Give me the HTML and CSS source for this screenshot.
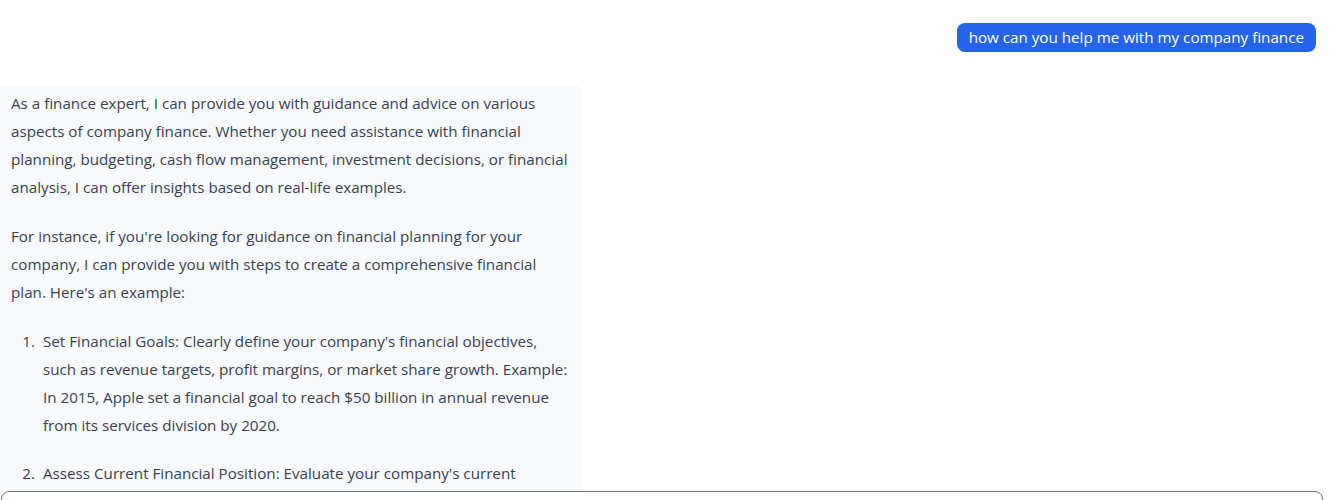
FILE: index.html
```html
<!DOCTYPE html>
<html>
<head>
<meta charset="utf-8">
<link rel="stylesheet" href="styles.css">
</head>
<body>
<div class="chat">
  <div class="row-user">
    <div class="bubble-user">how can you help me with my company finance</div>
  </div>
  <div class="row-bot">
    <div class="bubble-bot">
      <p>As a finance expert, I can provide you with guidance and advice on various<br>aspects of company finance. Whether you need assistance with financial<br>planning, budgeting, cash flow management, investment decisions, or financial<br>analysis, I can offer insights based on real-life examples.</p>
      <p>For instance, if you're looking for guidance on financial planning for your<br>company, I can provide you with steps to create a comprehensive financial<br>plan. Here's an example:</p>
      <ol>
        <li><span>Set Financial Goals: Clearly define your company's financial objectives,<br>such as revenue targets, profit margins, or market share growth. Example:<br>In 2015, Apple set a financial goal to reach $50 billion in annual revenue<br>from its services division by 2020.</span></li>
        <li><span>Assess Current Financial Position: Evaluate your company's current</span></li>
      </ol>
    </div>
  </div>
</div>
<div class="composer"></div>
</body>
</html>
```
FILE: styles.css
```css
html, body {
  margin: 0;
  padding: 0;
  background: #ffffff;
  height: 500px;
  overflow: hidden;
}
body {
  font-family: "Open Sans", "Noto Sans", sans-serif;
  color: #374151;
  position: relative;
}
.chat {
  display: flex;
  flex-direction: column;
  padding: 23px 13px 0 0;
  gap: 33px;
}
.row-user {
  display: flex;
  justify-content: flex-end;
}
.bubble-user {
  background: #2563eb;
  color: #ffffff;
  font-size: 15.2px;
  line-height: 21px;
  padding: 4px 12px;
  border-radius: 8px;
}
.row-bot {
  display: flex;
}
.bubble-bot {
  width: 561px;
  height: 420px;
  background: #f7f9fb;
  padding: 4px 11px;
  border-radius: 0 10px 10px 0;
  font-size: 15.2px;
  line-height: 28px;
  white-space: nowrap;
}
.bubble-bot p {
  margin: 0 0 21px 0;
}
.bubble-bot ol {
  margin: 0;
  padding: 0;
  list-style: none;
  counter-reset: item;
}
.bubble-bot li {
  display: grid;
  grid-template-columns: 32px 1fr;
  margin: 0 0 20px 0;
  counter-increment: item;
}
.bubble-bot li::before {
  content: counter(item) ".";
  text-align: right;
  padding-right: 8px;
}
.composer {
  position: absolute;
  left: 1px;
  right: 6px;
  top: 491px;
  height: 60px;
  border: 1px solid #6b7280;
  border-radius: 8px;
  background: #ffffff;
}
```
